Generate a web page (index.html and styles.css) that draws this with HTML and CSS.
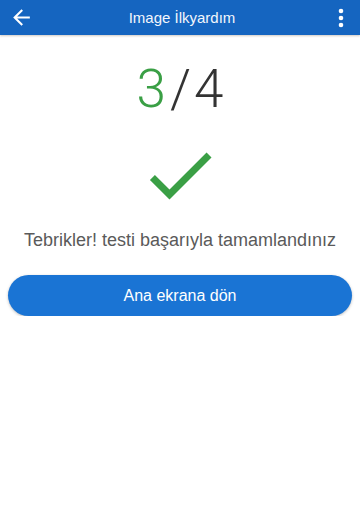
FILE: index.html
```html
<!DOCTYPE html>
<html lang="tr">
<head>
<meta charset="utf-8">
<link rel="stylesheet" href="styles.css">
</head>
<body>
<header class="appbar">
  <button class="icon-btn back" aria-label="Geri">
    <svg width="25" height="25" viewBox="0 0 24 24"><path d="M20 11H7.83l5.59-5.59L12 4l-8 8 8 8 1.41-1.41L7.83 13H20v-2z" fill="#fff"/></svg>
  </button>
  <h1 class="title">Image İlkyardım</h1>
  <button class="icon-btn more" aria-label="Menü">
    <svg width="20" height="24" viewBox="0 0 20 24"><circle cx="10" cy="5" r="2.3" fill="#fff"/><circle cx="10" cy="12" r="2.3" fill="#fff"/><circle cx="10" cy="19" r="2.3" fill="#fff"/></svg>
  </button>
</header>
<main class="result">
  <div class="score"><span class="got">3</span><span class="slash">/</span><span class="total">4</span></div>
  <svg class="check" width="84" height="84" viewBox="0 0 24 24"><path d="M9 16.17L4.83 12l-1.42 1.41L9 19 21 7l-1.41-1.41z" fill="#3a9f45"/></svg>
  <p class="message">Tebrikler! testi başarıyla tamamlandınız</p>
  <button class="home-btn">Ana ekrana dön</button>
</main>
</body>
</html>
```
FILE: styles.css
```css
html, body {
  margin: 0;
  padding: 0;
  background: #fff;
  font-family: "Liberation Sans", Arial, sans-serif;
}
.appbar {
  height: 35px;
  background: #1565c0;
  display: flex;
  align-items: center;
  justify-content: space-between;
  padding: 0 8px 0 9px;
  box-shadow: 0 1px 2px rgba(120, 100, 80, 0.35);
}
.icon-btn {
  background: none;
  border: 0;
  padding: 0;
  display: flex;
  align-items: center;
  justify-content: center;
  width: 25px;
  height: 30px;
}
.icon-btn.more { width: 22px; }
.title {
  margin: 0;
  color: #f2f6fc;
  font-size: 15px;
  font-weight: normal;
}
.result {
  display: flex;
  flex-direction: column;
  align-items: center;
  padding: 0 8px;
}
.score {
  margin-top: 24px;
  font-family: Roboto, "Liberation Sans", sans-serif;
  font-weight: 300;
  font-size: 53px;
  line-height: 60px;
  display: flex;
}
.got { color: #3a9f45; }
.slash { color: #333; margin: 0 3px 0 4px; }
.total { color: #333; }
.check {
  margin-top: 14px;
  display: block;
}
.message {
  margin: 13px 0 0;
  color: #5a5a5a;
  font-size: 18px;
}
.home-btn {
  margin-top: 24px;
  width: 100%;
  height: 41px;
  border: 0;
  border-radius: 21px;
  background: #1a74d4;
  color: #fff;
  font-family: "Liberation Sans", Arial, sans-serif;
  font-size: 16px;
  box-shadow: 0 1px 3px rgba(0, 0, 0, 0.25);
}
```
